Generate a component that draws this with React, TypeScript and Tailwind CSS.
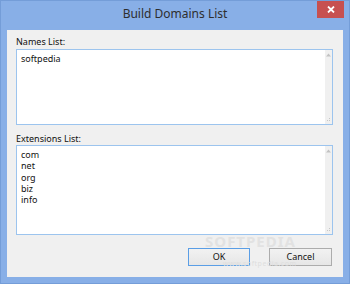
import React from "react";

const font = { fontFamily: '"Noto Sans", "Open Sans", sans-serif' };

function ScrollStrip() {
  return (
    <div className="w-[7px] bg-[#f0f0f0] flex flex-col justify-between items-center pt-[3px] pb-[2px]">
      <svg width="5" height="4" viewBox="0 0 5 4">
        <polygon points="2.5,0.5 5,3.5 0,3.5" fill="#c2c2c2" />
      </svg>
      <svg width="5" height="5" viewBox="0 0 5 5">
        <rect x="3" y="1" width="1" height="1" fill="#c6c6c6" />
        <rect x="1" y="3" width="1" height="1" fill="#c6c6c6" />
        <rect x="3" y="3" width="1" height="1" fill="#c6c6c6" />
      </svg>
    </div>
  );
}

function TextBox({ lines, h, pt }: { lines: string[]; h: string; pt: string }) {
  return (
    <div className={`${h} border border-[#9cc4ee] bg-white flex`}>
      <div className={`flex-1 pl-[4px] ${pt} text-[9px] leading-[11.25px] text-[#111]`}>
        {lines.map((l) => (
          <div key={l}>{l}</div>
        ))}
      </div>
      <ScrollStrip />
    </div>
  );
}

export default function App() {
  return (
    <div
      className="w-[350px] h-[284px] bg-[#88afe7] border border-[#749dd8] flex flex-col relative overflow-hidden"
      style={font}
    >
      <div className="h-[29px] flex items-center justify-center relative">
        <span className="text-[12px] leading-[14px] text-[#2e2e2e] mt-[-4px]">Build Domains List</span>
        <div className="absolute right-[5px] top-0 w-[27px] h-[17px] bg-[#c75050] flex items-center justify-center">
          <svg width="8" height="7" viewBox="0 0 8 7">
            <path d="M1 0.5 L7 6.5 M7 0.5 L1 6.5" stroke="#ffffff" strokeWidth="1.8" />
          </svg>
        </div>
      </div>
      <div className="mx-[6px] mb-[6px] flex-1 bg-[#f0f0f0] pt-[5px] pl-[9px] pr-[10px] flex flex-col relative">
        <div className="h-[13px] leading-[13px] text-[9px] text-[#111] mb-[1px]">Names List:</div>
        <TextBox lines={["softpedia"]} h="h-[76px]" pt="pt-[3px]" />
        <div className="h-[13px] leading-[13px] text-[9px] text-[#111] mt-[7px]">Extensions List:</div>
        <TextBox lines={["com", "net", "org", "biz", "info"]} h="h-[90px]" pt="pt-[3px]" />
        <div className="flex justify-end gap-[19px] mt-[13px] pr-[1px]">
          <div className="w-[62px] h-[18px] border border-[#5a9ee6] bg-gradient-to-b from-[#f2f2f2] to-[#e6e6e6] flex items-center justify-center text-[9px] text-[#111]">
            OK
          </div>
          <div className="w-[63px] h-[18px] border border-[#acacac] bg-gradient-to-b from-[#f2f2f2] to-[#e6e6e6] flex items-center justify-center text-[9px] text-[#111]">
            Cancel
          </div>
        </div>
        <div className="absolute left-[198px] top-[204px] text-[15px] leading-[15px] font-bold tracking-[1px] text-[#e2e2e2] pointer-events-none">
          SOFTPEDIA
        </div>
        <div className="absolute left-[216px] top-[230px] text-[7px] leading-[8px] tracking-[0.5px] text-[#dedede] pointer-events-none">
          www.softpedia.com
        </div>
      </div>
    </div>
  );
}
